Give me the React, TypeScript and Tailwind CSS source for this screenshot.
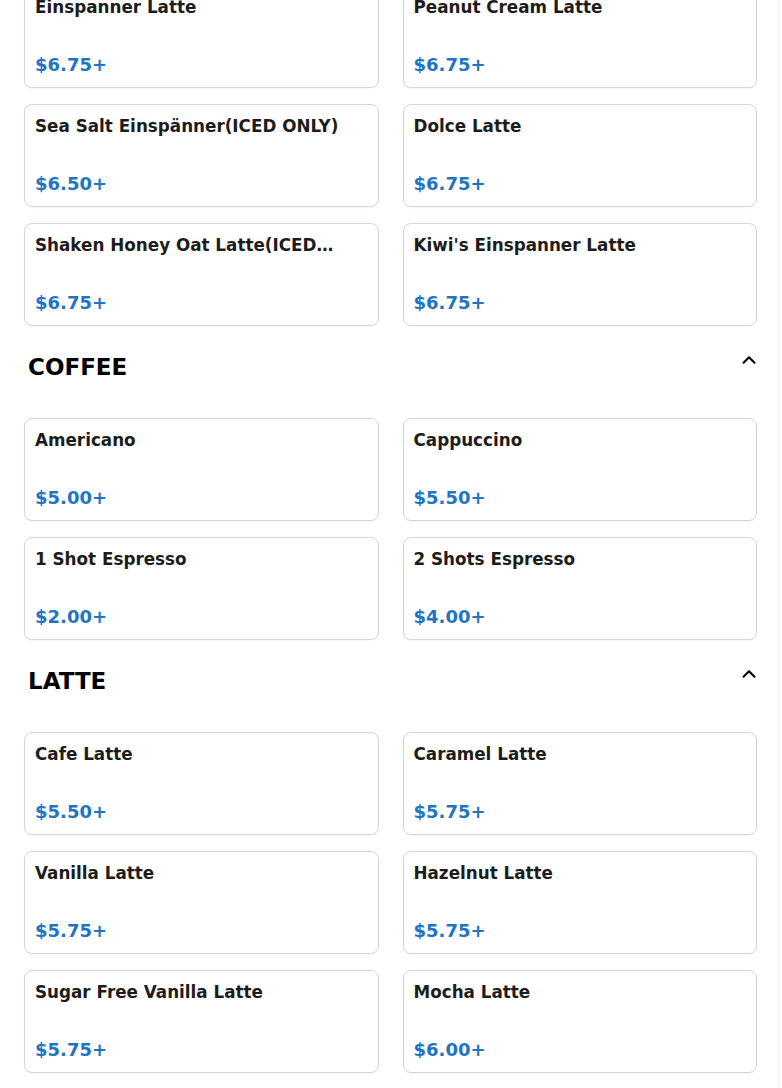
import { ChevronUp } from "lucide-react";

type Item = { name: string; price: string };

const topItems: Item[] = [
  { name: "Einspanner Latte", price: "$6.75+" },
  { name: "Peanut Cream Latte", price: "$6.75+" },
  { name: "Sea Salt Einspänner(ICED ONLY)", price: "$6.50+" },
  { name: "Dolce Latte", price: "$6.75+" },
  { name: "Shaken Honey Oat Latte(ICED ONLY)", price: "$6.75+" },
  { name: "Kiwi's Einspanner Latte", price: "$6.75+" },
];

const coffee: Item[] = [
  { name: "Americano", price: "$5.00+" },
  { name: "Cappuccino", price: "$5.50+" },
  { name: "1 Shot Espresso", price: "$2.00+" },
  { name: "2 Shots Espresso", price: "$4.00+" },
];

const latte: Item[] = [
  { name: "Cafe Latte", price: "$5.50+" },
  { name: "Caramel Latte", price: "$5.75+" },
  { name: "Vanilla Latte", price: "$5.75+" },
  { name: "Hazelnut Latte", price: "$5.75+" },
  { name: "Sugar Free Vanilla Latte", price: "$5.75+" },
  { name: "Mocha Latte", price: "$6.00+" },
  { name: "Matcha Latte", price: "$6.00+" },
  { name: "Brown Sugar Latte", price: "$6.00+" },
];

function Card({ item }: { item: Item }) {
  return (
    <div className="flex h-[103px] flex-col justify-between rounded-lg border border-[#d6d6d6] bg-white px-[10px] pt-[9px] pb-[8px] shadow-[0_1px_2px_rgba(0,0,0,0.04)]">
      <div className="mr-[29px] truncate text-[16.8px] leading-6 font-bold text-[#1c1c1c]">
        {item.name}
      </div>
      <div className="text-[18px] leading-7 font-bold text-[#1f74c4]">
        {item.price}
      </div>
    </div>
  );
}

function Grid({ items }: { items: Item[] }) {
  return (
    <div className="grid grid-cols-2 gap-x-6 gap-y-4">
      {items.map((it) => (
        <Card key={it.name} item={it} />
      ))}
    </div>
  );
}

function Heading({ title }: { title: string }) {
  return (
    <div className="mt-[23px] mb-[33px] flex items-start justify-between pl-1">
      <h2 className="text-[23px] leading-9 font-bold text-black">{title}</h2>
      <ChevronUp className="-mr-[3px] h-[22px] w-[22px] text-black" strokeWidth={2.3} />
    </div>
  );
}

export default function App() {
  return (
    <div
      className="h-[1088px] w-[782px] overflow-hidden bg-white"
      style={{ fontFamily: '"DejaVu Sans", Verdana, sans-serif' }}
    >
      <div className="w-[779px] border-r border-[#f0f0f0]">
        <div className="-mt-[15px] pl-6 pr-[21px]">
          <Grid items={topItems} />
          <Heading title="COFFEE" />
          <Grid items={coffee} />
          <Heading title="LATTE" />
          <Grid items={latte} />
          <div className="h-10" />
        </div>
      </div>
    </div>
  );
}
